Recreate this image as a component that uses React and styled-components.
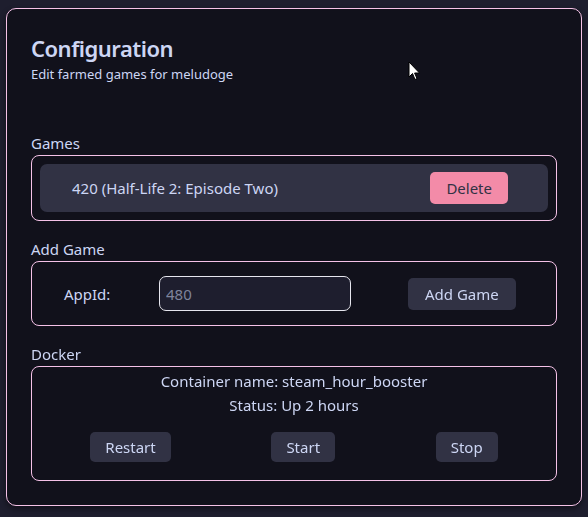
import React from 'react';
import styled, { createGlobalStyle } from 'styled-components';

const GlobalStyle = createGlobalStyle`
   html, body {
      margin: 0;
      padding: 0;
      background-color: #1e1e2e;
      font-family: "Noto Sans", "Open Sans", sans-serif;
      color: #cdd6f4;
   }
   * { box-sizing: border-box; }
`;

const Page = styled.div`
   position: relative;
   width: 588px;
   height: 517px;
   padding: 8px 6px 0 6px;
`;

const Card = styled.div`
   height: 498px;
   background-color: #11111b;
   border: 1px solid #f5c2e7;
   border-radius: 10px;
   box-shadow: 0 3px 6px rgba(0, 0, 0, 0.45);
   padding: 24px 24px 0 24px;
   display: flex;
   flex-direction: column;
`;

const Header = styled.div`
   margin-bottom: 50px;
`;

const Title = styled.h1`
   margin: 0;
   font-size: 22px;
   line-height: 30px;
   font-weight: 600;
   letter-spacing: -0.5px;
   color: #cdd6f4;
`;

const Subtitle = styled.p`
   margin: 2px 0 0 0;
   font-size: 13px;
   line-height: 18px;
   color: #cdd6f4;
`;

const Section = styled.section`
   margin-bottom: 18px;
`;

const Label = styled.div`
   font-size: 15px;
   line-height: 20px;
   margin-bottom: 2px;
   color: #cdd6f4;
`;

const Box = styled.div`
   border: 1px solid #f5c2e7;
   border-radius: 8px;
   padding: ${(p) => p.pad || '8px'};
`;

const GameRow = styled.div`
   height: 48px;
   background-color: #313244;
   border-radius: 7px;
   display: flex;
   align-items: center;
   justify-content: space-between;
   padding: 0 40px 0 32px;
   font-size: 15px;
`;

const Button = styled.button`
   font-family: inherit;
   font-size: 15px;
   height: ${(p) => p.h || 30}px;
   padding: 0 ${(p) => p.px || 15}px;
   border: none;
   border-radius: 5px;
   background-color: ${(p) => (p.danger ? '#f38ba8' : '#313244')};
   color: ${(p) => (p.danger ? '#313244' : '#cdd6f4')};
   cursor: pointer;
`;

const AddRow = styled.div`
   display: flex;
   align-items: center;
   height: 63px;
   padding-left: 32px;
`;

const FieldLabel = styled.label`
   width: 95px;
   font-size: 15px;
`;

const Input = styled.input`
   width: 192px;
   height: 35px;
   background-color: #1e1e2e;
   border: 1.5px solid #e6e6ee;
   border-radius: 7px;
   padding: 0 6px;
   font-family: inherit;
   font-size: 15px;
   color: #cdd6f4;
   outline: none;
   caret-color: #cdd6f4;
   &::placeholder { color: #7f849c; }
`;

const AddButton = styled(Button)`
   margin-left: 57px;
`;

const DockerInfo = styled.div`
   text-align: center;
   font-size: 15px;
   line-height: 24px;
`;

const DockerActions = styled.div`
   display: flex;
   justify-content: space-around;
   padding: 0 8px;
   margin-top: 15px;
`;

const Cursor = styled.svg`
   position: absolute;
   left: 408px;
   top: 61px;
`;

export default function App() {
   return (
      <>
         <GlobalStyle />
         <Page>
            <Card>
               <Header>
                  <Title>Configuration</Title>
                  <Subtitle>Edit farmed games for meludoge</Subtitle>
               </Header>

               <Section>
                  <Label>Games</Label>
                  <Box>
                     <GameRow>
                        <span>420 (Half-Life 2: Episode Two)</span>
                        <Button danger h={32} px={16}>Delete</Button>
                     </GameRow>
                  </Box>
               </Section>

               <Section>
                  <Label>Add Game</Label>
                  <Box pad="0">
                     <AddRow>
                        <FieldLabel>AppId:</FieldLabel>
                        <Input placeholder="480" autoFocus />
                        <AddButton h={32} px={17}>Add Game</AddButton>
                     </AddRow>
                  </Box>
               </Section>

               <Section>
                  <Label>Docker</Label>
                  <Box pad="2px 0 18px 0">
                     <DockerInfo>
                        <div>Container name: steam_hour_booster</div>
                        <div>Status: Up 2 hours</div>
                     </DockerInfo>
                     <DockerActions>
                        <Button>Restart</Button>
                        <Button>Start</Button>
                        <Button>Stop</Button>
                     </DockerActions>
                  </Box>
               </Section>
            </Card>
            <Cursor width="13" height="20" viewBox="0 0 13 20">
               <path d="M1 1 L1 16 L4.5 12.5 L7 18.5 L9 17.6 L6.6 12 L11.5 12 Z" fill="#fff" stroke="#000" strokeWidth="1" />
            </Cursor>
         </Page>
      </>
   );
}
